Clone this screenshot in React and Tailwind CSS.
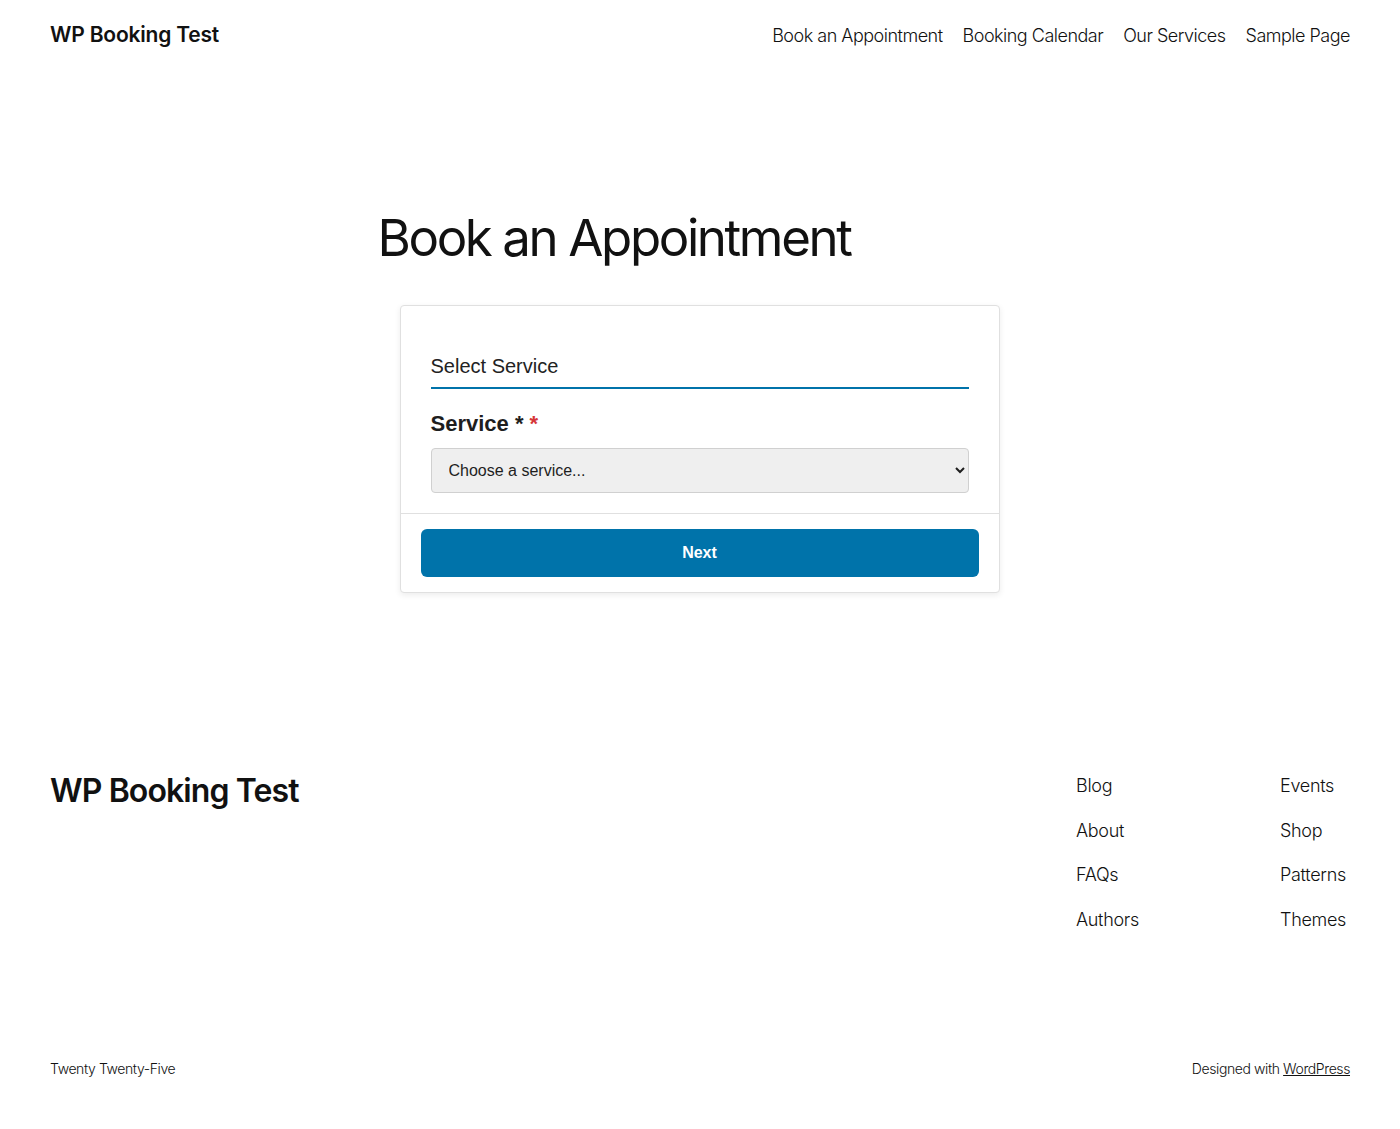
import React from 'react'

const navLinks = ['Book an Appointment', 'Booking Calendar', 'Our Services', 'Sample Page']
const footerCols = [
  ['Blog', 'About', 'FAQs', 'Authors'],
  ['Events', 'Shop', 'Patterns', 'Themes'],
]

const App = () => {
  return (
    <div className="min-h-[1129px] bg-white text-[#111] font-['Inter','Noto_Sans',sans-serif]">
      {/* header */}
      <header className="flex items-center justify-between px-[50px] h-[70px]">
        <a className="text-[21px] font-semibold tracking-[-0.2px]">WP Booking Test</a>
        <nav className="flex gap-[20px] text-[18px] font-light tracking-[-0.5px]">
          {navLinks.map((l) => (
            <a key={l}>{l}</a>
          ))}
        </nav>
      </header>

      <main className="w-[645px] mx-auto pt-[137px]">
        <h1 className="text-[51px] leading-[1.2] font-normal tracking-[-2.4px]">Book an Appointment</h1>

        <div className="mt-[37px] mx-[22px] w-[600px] bg-white border border-[#e0e0e0] rounded-[4px] shadow-[0_2px_6px_rgba(0,0,0,0.08)] font-['Liberation_Sans',Arial,sans-serif]">
          <div className="px-[30px] pt-[49px] pb-[20px]">
            <div className="text-[20px] leading-[23px] text-[#222] pb-[9px] border-b-2 border-[#0073aa]">Select Service</div>
            <label className="block mt-[22px] text-[22px] leading-[26px] font-bold text-[#1e1e1e]">
              Service * <span className="text-[#d63638]">*</span>
            </label>
            <select className="mt-[11px] w-full h-[45px] px-[13px] text-[16px] text-[#1e1e1e] bg-[#efefef] border border-[#d0d0d0] rounded-[4px]">
              <option>Choose a service...</option>
            </select>
          </div>
          <div className="border-t border-[#e0e0e0] px-[20px] pt-[15px] pb-[15px]">
            <button
              type="button"
              className="w-full h-[48px] rounded-[6px] bg-[#0073aa] text-white text-[16px] font-bold"
            >
              Next
            </button>
          </div>
        </div>
      </main>

      {/* footer */}
      <footer className="px-[50px] pt-[178px]">
        <div className="flex justify-between">
          <a className="text-[32px] font-semibold tracking-[-0.9px] leading-none mt-[4px]">WP Booking Test</a>
          <div className="flex gap-[136px] mt-[2px]">
            {footerCols.map((col, i) => (
              <ul key={i} className={`flex flex-col gap-[18.5px] text-[18px] font-light tracking-[-0.3px] ${i === 0 ? 'w-[68px]' : 'w-[70px]'}`}>
                {col.map((c) => (
                  <li key={c} className="leading-[26px]">{c}</li>
                ))}
              </ul>
            ))}
          </div>
        </div>
        <div className="flex justify-between mt-[125px] text-[14px] font-light tracking-[-0.4px]">
          <span>Twenty Twenty-Five</span>
          <span>
            Designed with <a className="underline">WordPress</a>
          </span>
        </div>
      </footer>
    </div>
  )
}

export default App
